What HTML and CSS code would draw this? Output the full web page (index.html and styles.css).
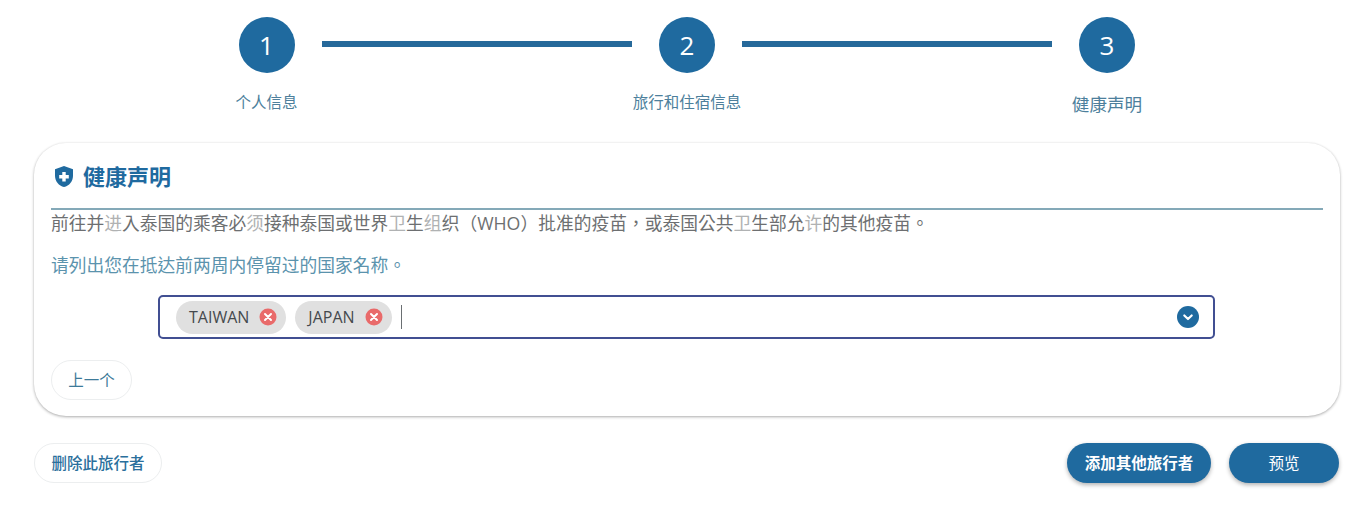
FILE: index.html
```html
<!DOCTYPE html>
<html lang="zh-TW">
<head>
<meta charset="utf-8">
<title>健康声明</title>
<link rel="stylesheet" href="styles.css">
</head>
<body>
<div class="page">
  <div class="stepper">
    <div class="step">
      <div class="circle">1</div>
      <div class="step-label">个人信息</div>
    </div>
    <div class="connector"></div>
    <div class="step">
      <div class="circle">2</div>
      <div class="step-label">旅行和住宿信息</div>
    </div>
    <div class="connector"></div>
    <div class="step">
      <div class="circle">3</div>
      <div class="step-label step-label-active">健康声明</div>
    </div>
  </div>

  <section class="card">
    <h2 class="card-title">
      <svg class="shield" viewBox="3 1.500 18 21" aria-hidden="true"><path fill="#1f6a9f" d="M12 1.500 3 4.800v6.400c0 5.600 3.800 10 9 11.300 5.200-1.300 9-5.700 9-11.300V4.800z"/><path fill="#fff" d="M10.300 7.500h3.400v3.100h3.100V14h-3.100v3.100h-3.400V14H7.200v-3.400h3.100z"/></svg>
      <span>健康声明</span>
    </h2>
    <p class="notice">前往并<span class="thin">进</span>入泰国的乘客必<span class="thin">须</span>接种泰国或世界<span class="thin">卫</span>生<span class="thin">组</span>织（WHO）批准的疫苗，或泰国公共<span class="thin">卫</span>生部允<span class="thin">许</span>的其他疫苗。</p>
    <p class="question">请列出您在抵达前两周内停留过的国家名称。</p>
    <div class="select-row">
      <div class="select">
        <span class="chip">TAIWAN<svg class="chip-x" viewBox="0 0 18 18" aria-hidden="true"><circle cx="9" cy="9" r="8.500" fill="#e96a6a"/><path d="M6 6l6 6M12 6l-6 6" stroke="#fff" stroke-width="2" stroke-linecap="round"/></svg></span>
        <span class="chip">JAPAN<svg class="chip-x" viewBox="0 0 18 18" aria-hidden="true"><circle cx="9" cy="9" r="8.500" fill="#e96a6a"/><path d="M6 6l6 6M12 6l-6 6" stroke="#fff" stroke-width="2" stroke-linecap="round"/></svg></span>
        <span class="caret"></span>
        <svg class="chevron" viewBox="0 0 22 22" aria-hidden="true"><circle cx="11" cy="11" r="11" fill="#1f6a9f"/><path d="M7.300 9.500 11 13l3.700-3.500" fill="none" stroke="#fff" stroke-width="2.200" stroke-linecap="round" stroke-linejoin="round"/></svg>
      </div>
    </div>
    <button class="btn btn-ghost btn-prev" type="button">上一个</button>
  </section>

  <div class="actions">
    <button class="btn btn-ghost btn-delete" type="button">删除此旅行者</button>
    <div class="actions-right">
      <button class="btn btn-solid btn-add" type="button">添加其他旅行者</button>
      <button class="btn btn-solid btn-preview" type="button">预览</button>
    </div>
  </div>
</div>
</body>
</html>
```
FILE: styles.css
```css
* { box-sizing: border-box; }
html, body { margin: 0; background: #fff; }
body {
  font-family: "Open Sans", "Noto Sans CJK TC", sans-serif;
  color: #5f6468;
  height: 522px;
  overflow: hidden;
}
.page { padding: 17px 26px 0 34px; }
.stepper { display: flex; margin-left: 178px; height: 126px; }
.step { width: 110px; display: flex; flex-direction: column; align-items: center; }
.step:first-child { padding-right: 1px; }
.circle {
  width: 56px; height: 56px; border-radius: 50%;
  background: #1f6a9f; color: #fff;
  display: flex; align-items: center; justify-content: center;
  font-size: 26px; line-height: 1;
}
.step-label { margin-top: 19px; font-size: 15.500px; line-height: 20px; color: #4d7f9c; white-space: nowrap; }
.step-label-active { margin-top: 20px; font-size: 17.600px; line-height: 22px; }
.connector { width: 310px; height: 6px; margin-top: 24px; background: #26699a; }

.card {
  width: 1306px; height: 273px;
  background: #fff;
  border-radius: 32px;
  padding: 16px 17px 0;
  box-shadow: 0 1px 3px rgba(0,0,0,.32), 0 0 2px rgba(0,0,0,.04);
}
.card-title {
  display: flex; align-items: center; gap: 10px;
  margin: 0; height: 49px; padding: 0 0 15px 4px;
  font-size: 22px; font-weight: 700; line-height: 34px; color: #1f6a9f;
}
.shield { width: 18px; height: 21px; flex: none; }
.notice {
  margin: 0; padding-top: 1px;
  border-top: 2px solid #84a9b8;
  font-size: 17.750px; line-height: 24px; color: #6d6f71;
  white-space: nowrap;
}
.thin { color: #b0b2b3; }
.question { margin: 18px 0 0; font-size: 17.750px; line-height: 24px; color: #5b93ad; white-space: nowrap; }
.select-row { margin: 18px 0 0 107px; }
.select {
  width: 1057px; height: 44px;
  border: 2px solid #414f92; border-radius: 5px;
  display: flex; align-items: center; gap: 9px;
  padding: 0 14px 0 16px;
}
.chip {
  display: inline-flex; align-items: center; gap: 10px;
  height: 33px; padding: 0 9px 0 13px;
  border-radius: 17px; background: #e0e0e0;
  font-size: 16px; color: #45494d; white-space: nowrap;
}
.chip-x { width: 18px; height: 18px; flex: none; }
.caret { width: 1px; height: 24px; background: #6a6f72; }
.chevron { width: 22px; height: 22px; margin-left: auto; flex: none; }
.btn {
  font-family: inherit; font-size: 15.500px; line-height: 20px;
  border-radius: 20px; height: 40px; padding: 0; cursor: pointer;
}
.btn-ghost { background: #fff; border: 1px solid #eceeef; color: #2a6f9c; }
.btn-prev { display: block; width: 81px; margin-top: 21px; color: #3d7a99; }
.btn-delete { width: 128px; font-weight: 500; }
.btn-solid {
  background: #1f6a9f; border: 0; color: #fff;
  box-shadow: 0 2px 4px rgba(0,0,0,.3);
}
.btn-add { width: 144px; font-weight: 700; }
.btn-preview { width: 110px; }
.actions { display: flex; justify-content: space-between; align-items: center; width: 1305px; margin-top: 27px; }
.actions-right { display: flex; gap: 18px; }
```
